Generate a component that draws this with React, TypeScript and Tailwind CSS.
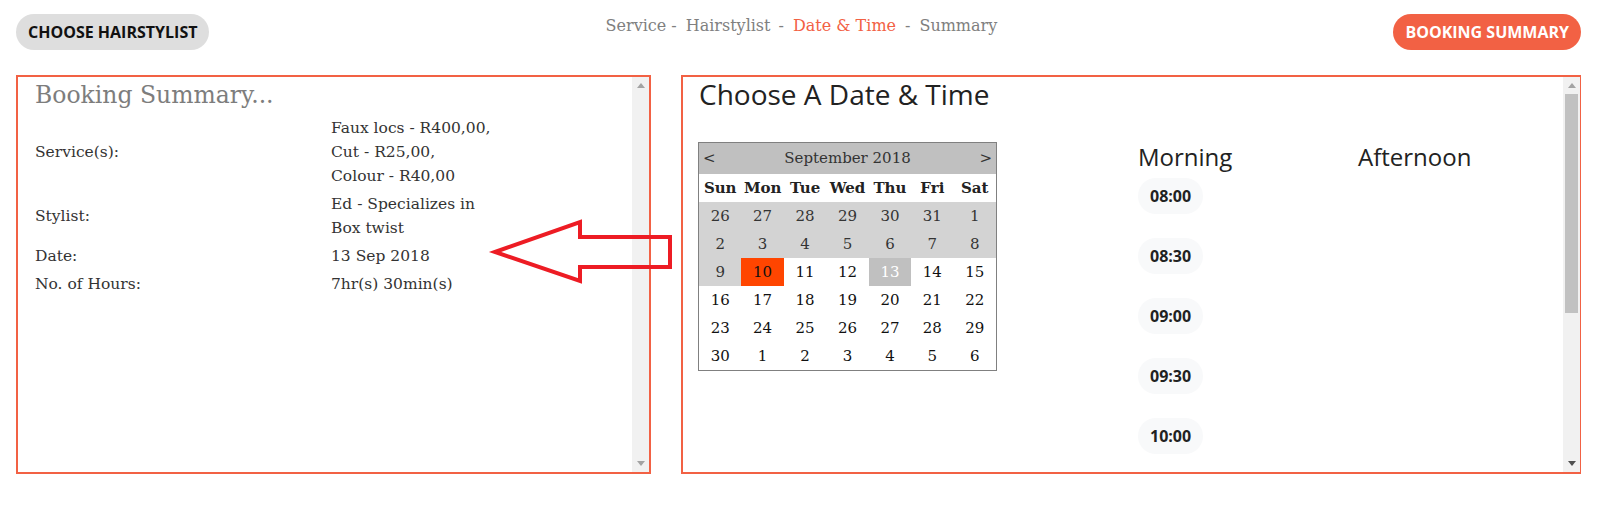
import React from "react";

const serif = "font-['DejaVu_Serif',serif]";
const sans = "font-['Open_Sans',sans-serif]";

const weeks = [
  [26, 27, 28, 29, 30, 31, 1],
  [2, 3, 4, 5, 6, 7, 8],
  [9, 10, 11, 12, 13, 14, 15],
  [16, 17, 18, 19, 20, 21, 22],
  [23, 24, 25, 26, 27, 28, 29],
  [30, 1, 2, 3, 4, 5, 6],
];

const morning = ["08:00", "08:30", "09:00", "09:30", "10:00"];

function cellClass(w: number, day: number) {
  if (w < 2 || (w === 2 && day === 9)) return "bg-[#d3d3d3] text-[#333]";
  if (w === 2 && day === 10) return "bg-[#ff4500] text-[#111]";
  if (w === 2 && day === 13) return "bg-[#c0c0c0] text-white";
  return "bg-white text-[#111]";
}

function Triangle({ up, color }: { up?: boolean; color: string }) {
  return (
    <svg width="8" height="5" viewBox="0 0 8 5">
      <polygon points={up ? "0,5 8,5 4,0" : "0,0 8,0 4,5"} fill={color} />
    </svg>
  );
}

// classic scrollbar look (headless browser hides the real ones)
function FakeScrollbar({ thumb }: { thumb?: boolean }) {
  return (
    <div className="w-[17px] shrink-0 h-full bg-[#f1f1f1] flex flex-col">
      <div className="h-[17px] flex items-center justify-center">
        <Triangle up color="#a3a3a3" />
      </div>
      <div className="flex-1 px-[2px]">
        {thumb && <div className="h-[219px] bg-[#c1c1c1]" />}
      </div>
      <div className="h-[17px] flex items-center justify-center">
        <Triangle color={thumb ? "#505050" : "#a3a3a3"} />
      </div>
    </div>
  );
}

function Calendar() {
  return (
    <div className={`w-[299px] border border-[#808080] ${serif} text-[15px]`}>
      <div className="h-[31px] bg-[#c0c0c0] flex items-center justify-between px-[4px] text-[#333]">
        <span>&lt;</span>
        <span>September 2018</span>
        <span>&gt;</span>
      </div>
      <div className="grid grid-cols-7 h-[28px] bg-white items-center font-bold text-[#222]">
        {["Sun", "Mon", "Tue", "Wed", "Thu", "Fri", "Sat"].map((n) => (
          <span key={n} className="text-center">
            {n}
          </span>
        ))}
      </div>
      {weeks.map((week, w) => (
        <div key={w} className="grid grid-cols-7">
          {week.map((day, d) => (
            <div key={d} className={`h-[28px] flex items-center justify-center ${cellClass(w, day)}`}>
              {day}
            </div>
          ))}
        </div>
      ))}
    </div>
  );
}

function SummaryRow({ label, lines }: { label: string; lines: string[] }) {
  return (
    <>
      <div className="py-[2px] flex items-center">{label}</div>
      <div className="py-[2px]">
        {lines.map((l) => (
          <div key={l}>{l}</div>
        ))}
      </div>
    </>
  );
}

export default function App() {
  return (
    <div className="relative w-[1623px] h-[505px] bg-white overflow-hidden">
      <div className="ml-4 w-[1565px] pt-[14px]">
        {/* top bar */}
        <div className="flex justify-between items-start">
          <button
            className={`h-[36px] px-3 rounded-full bg-[#dedede] text-[#111] ${sans} font-bold text-[16px] leading-[24px]`}
          >
            CHOOSE HAIRSTYLIST
          </button>
          <div className={`${serif} text-[16px] leading-[24px] text-[#808080] flex`}>
            <span>Service</span>
            <span className="ml-[5px] mr-[9px]">-</span>
            <span>Hairstylist</span>
            <span className="ml-[8px] mr-[9px]">-</span>
            <span className="text-[#f26144]">Date &amp; Time</span>
            <span className="ml-[9px] mr-[9px]">-</span>
            <span>Summary</span>
          </div>
          <button
            className={`h-[36px] px-3 rounded-full bg-[#f26144] text-white ${sans} font-bold text-[16px] leading-[24px]`}
          >
            BOOKING SUMMARY
          </button>
        </div>

        {/* panels */}
        <div className="flex gap-[30px] mt-[25px]">
          <div className="w-[635px] h-[399px] border-2 border-[#f26144] flex">
            <div className={`flex-1 pl-[17px] ${serif} text-[#333]`}>
              <h2 className="text-[23.5px] leading-[32px] text-[#7d7d7d] pt-[2px]">
                Booking Summary...
              </h2>
              <div className="grid grid-cols-[296px_1fr] mt-[3px] text-[15.5px] leading-[24px]">
                <SummaryRow
                  label="Service(s):"
                  lines={["Faux locs - R400,00,", "Cut - R25,00,", "Colour - R40,00"]}
                />
                <SummaryRow label="Stylist:" lines={["Ed - Specializes in", "Box twist"]} />
                <SummaryRow label="Date:" lines={["13 Sep 2018"]} />
                <SummaryRow label="No. of Hours:" lines={["7hr(s) 30min(s)"]} />
              </div>
            </div>
            <FakeScrollbar />
          </div>

          <div className="w-[900px] h-[399px] border-2 border-[#f26144] flex">
            <div className="flex-1">
              <h1 className={`${sans} text-[28px] leading-[34px] text-[#222] pl-[16px]`}>
                Choose A Date &amp; Time
              </h1>
              <div className="grid grid-cols-[440px_220px_220px] mt-[29px]">
                <div className="px-[15px] pt-[2px]">
                  <Calendar />
                </div>
                <div className="px-[15px]">
                  <h3 className={`${sans} text-[24px] leading-[33px] text-[#222] mb-[5px]`}>
                    Morning
                  </h3>
                  <div className="flex flex-col gap-[24px] items-start">
                    {morning.map((t) => (
                      <span
                        key={t}
                        className={`h-[36px] px-3 rounded-full bg-[#f8f9fa] ${sans} font-bold text-[16px] leading-[36px] text-[#222]`}
                      >
                        {t}
                      </span>
                    ))}
                  </div>
                </div>
                <div className="px-[15px]">
                  <h3 className={`${sans} text-[24px] leading-[33px] text-[#222]`}>Afternoon</h3>
                </div>
              </div>
            </div>
            <FakeScrollbar thumb />
          </div>
        </div>
      </div>

      {/* red annotation arrow */}
      <svg
        className="absolute left-0 top-0 pointer-events-none"
        width="1623"
        height="505"
        viewBox="0 0 1623 505"
      >
        <polygon
          points="495,252 580,222 580,237 670,237 670,267 580,267 580,281"
          fill="none"
          stroke="#ed1c24"
          strokeWidth="4"
          strokeLinejoin="miter"
        />
      </svg>
    </div>
  );
}
